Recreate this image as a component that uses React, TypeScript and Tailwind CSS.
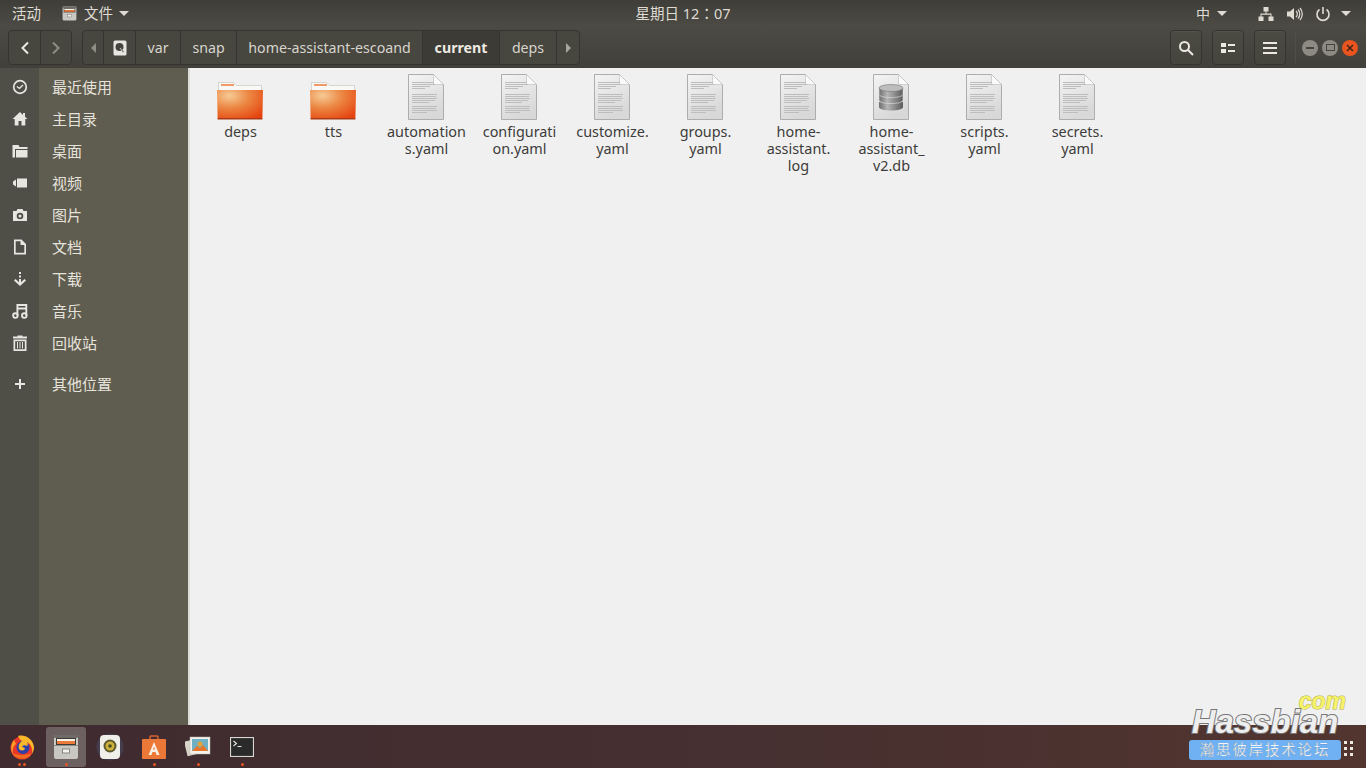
import React from "react";

const FONT = "font-['Noto_Sans','Noto_Sans_CJK_SC',sans-serif]";

const FolderIcon = () => (
  <svg width="47" height="46" viewBox="0 0 47 46">
    <defs>
      <radialGradient id="fold" cx="0.27" cy="0.2" r="0.95">
        <stop offset="0" stopColor="#f6cb96" />
        <stop offset="0.45" stopColor="#ec8743" />
        <stop offset="1" stopColor="#e5440f" />
      </radialGradient>
    </defs>
    <path d="M1.500 8.500h15l3 3h25v6h-43z" fill="#f8f8f6" stroke="#c9c7c2" strokeWidth="0.7" />
    <rect x="4" y="10" width="13" height="2" fill="#f09a68" />
    <path d="M0 16h46l-0.600 28.500H0.600z" fill="url(#fold)" />
    <rect x="0.600" y="44" width="44.800" height="1.500" fill="#a83a18" />
  </svg>
);

const docLines = [
  [8, 22], [10, 23], [12, 18], [14, 13],
  [20, 25], [22, 24], [24, 25], [26, 23], [28, 17],
  [32, 25], [34, 24], [36, 25], [38, 15],
];

const DocIcon = ({ db = false }: { db?: boolean }) => (
  <svg width="37" height="46" viewBox="0 0 37 46">
    <defs>
      <linearGradient id="pg" x1="0" y1="0" x2="0.4" y2="1">
        <stop offset="0" stopColor="#f4f4f4" />
        <stop offset="1" stopColor="#d8d8d8" />
      </linearGradient>
      <linearGradient id="cyl" x1="0" y1="0" x2="1" y2="0">
        <stop offset="0" stopColor="#6f6f6f" />
        <stop offset="0.35" stopColor="#b5b5b5" />
        <stop offset="1" stopColor="#5c5c5c" />
      </linearGradient>
    </defs>
    <path d="M0.500 0.500h25l10 10v35h-35z" fill="url(#pg)" stroke="#adadad" />
    <path d="M25.500 0.500v10h10z" fill="#fafafa" stroke="#c2c2c2" strokeWidth="0.7" />
    {!db &&
      docLines.map(([y, w], i) => (
        <rect key={i} x="4" y={y} width={w} height="1" fill="#bdbdbd" />
      ))}
    {db && (
      <g>
        <path d="M6 28v5c0 2.300 5 3.500 12 3.500s12-1.200 12-3.500v-5z" fill="url(#cyl)" />
        <path d="M6 20v6c0 2.300 5 3.500 12 3.500s12-1.200 12-3.500v-6z" fill="url(#cyl)" stroke="#e4e4e4" strokeWidth="0.6" />
        <path d="M6 14v6c0 2.300 5 3.500 12 3.500s12-1.200 12-3.500v-6z" fill="url(#cyl)" stroke="#e4e4e4" strokeWidth="0.6" />
        <ellipse cx="18" cy="14" rx="12" ry="3.500" fill="#bdbdbd" stroke="#777" strokeWidth="0.6" />
      </g>
    )}
  </svg>
);

const files: { lines: string[]; kind: "folder" | "doc" | "db" }[] = [
  { lines: ["deps"], kind: "folder" },
  { lines: ["tts"], kind: "folder" },
  { lines: ["automation", "s.yaml"], kind: "doc" },
  { lines: ["configurati", "on.yaml"], kind: "doc" },
  { lines: ["customize.", "yaml"], kind: "doc" },
  { lines: ["groups.", "yaml"], kind: "doc" },
  { lines: ["home-", "assistant.", "log"], kind: "doc" },
  { lines: ["home-", "assistant_", "v2.db"], kind: "db" },
  { lines: ["scripts.", "yaml"], kind: "doc" },
  { lines: ["secrets.", "yaml"], kind: "doc" },
];

const sideIcons: Record<string, React.ReactNode> = {
  recent: (
    <g fill="none" stroke="#e8e6e1" strokeWidth="1.700">
      <circle cx="8" cy="8" r="6.300" />
      <path d="M4.800 7.500l2.700 1.800 3.500-3.300" strokeWidth="1.300" />
    </g>
  ),
  home: <path d="M8 1L0.500 8h2.200v6.500h3.800V10h3v4.500h3.800V8h2.200l-2.500-2.300V2h-2v1.900z" fill="#e8e6e1" />,
  desktop: <path d="M0.500 2h6l1 2H15.500v2H3v8.500H0.500zM4 7h11.500v7.500H4z" fill="#e8e6e1" />,
  video: <path d="M1 6.500l3-2v7l-3-2zM5 3.500h10v9H5z" fill="#e8e6e1" />,
  photo: (
    <path
      fillRule="evenodd"
      d="M5.500 2h5l1 2h3.500v10H1V4h3.500zM8 5.700a3.300 3.300 0 100 6.600 3.300 3.300 0 000-6.600zM8 7.500a1.500 1.500 0 110 3 1.500 1.500 0 010-3z"
      fill="#e8e6e1"
    />
  ),
  docs: (
    <path fillRule="evenodd" d="M2 0.500h7.500l4.500 4.500v10.500H2zM3.700 2.200v11.600h8.600V6H8.500V2.200z" fill="#e8e6e1" />
  ),
  download: (
    <g fill="#e8e6e1">
      <rect x="7" y="1" width="2" height="2" />
      <rect x="7" y="4.500" width="2" height="2" />
      <path d="M7 8h2v3.200L12.500 8 14 9.400 8 15 2 9.400 3.500 8 7 11.200z" />
    </g>
  ),
  music: (
    <g fill="none" stroke="#e8e6e1" strokeWidth="1.900">
      <circle cx="3.400" cy="12.600" r="2.300" />
      <circle cx="12.300" cy="12.600" r="2.300" />
      <path d="M5.400 12.500V2h8.900v10.500M5.400 5.500h8.900" />
    </g>
  ),
  trash: (
    <g fill="#e8e6e1">
      <path d="M1 1.500h4.500V0.500h5v1h4.500V3.500H1z" />
      <path fillRule="evenodd" d="M1.500 4.500h13V16h-13zM3.200 6.200v8.100h9.600V6.200z" />
      <rect x="5" y="7" width="1" height="6.500" />
      <rect x="7.500" y="7" width="1" height="6.500" />
      <rect x="10" y="7" width="1" height="6.500" />
    </g>
  ),
  plus: <path d="M7 3h2v4h4v2H9v4H7V9H3V7h4z" fill="#e8e6e1" />,
};

const places = [
  ["recent", "最近使用"],
  ["home", "主目录"],
  ["desktop", "桌面"],
  ["video", "视频"],
  ["photo", "图片"],
  ["docs", "文档"],
  ["download", "下载"],
  ["music", "音乐"],
  ["trash", "回收站"],
];

const SideRow = ({ icon, label, className = "" }: { icon: string; label: string; className?: string }) => (
  <div className={`flex h-8 items-center ${className}`}>
    <div className="flex w-[39px] justify-center">
      <svg width="16" height="16" viewBox="0 0 16 16">
        {sideIcons[icon]}
      </svg>
    </div>
    <span className="ml-[13px] text-[15px] text-[#e6e3dc]">{label}</span>
  </div>
);

const Caret = () => <span className="inline-block border-x-[5px] border-t-[5px] border-x-transparent border-t-[#dfdbd2]" />;

const ToolButton = ({ children }: { children: React.ReactNode }) => (
  <div className="flex h-[35px] w-8 items-center justify-center rounded-[4px] border border-[#35342f] bg-gradient-to-b from-[#4b4a43] to-[#45443d] shadow-[inset_0_1px_0_#55544c]">
    {children}
  </div>
);

const Crumb = ({ children, w, active = false }: { children: React.ReactNode; w: string; active?: boolean }) => (
  <div
    className={`flex h-full items-center justify-center border-r border-[#35342f] text-[14.200px] ${w} ${
      active ? "bg-[#3c3b35] font-bold text-[#eeeae2]" : "text-[#d8d5cd]"
    }`}
  >
    {children}
  </div>
);

const DockDots = ({ n = 1 }: { n?: number }) => (
  <div className="absolute bottom-[1px] left-0 right-0 flex justify-center gap-[2px]">
    {Array.from({ length: n }).map((_, i) => (
      <span key={i} className="h-[3px] w-[3px] rounded-full bg-[#e9541f]" />
    ))}
  </div>
);

const DockItem = ({ children, dots = 1, active = false }: { children: React.ReactNode; dots?: number; active?: boolean }) => (
  <div className={`relative flex h-10 w-10 items-center justify-center rounded-[3px] ${active ? "bg-[#6c6160]" : ""}`}>
    {children}
    {dots > 0 && <DockDots n={dots} />}
  </div>
);

const FileCabinet = ({ size = 26 }: { size?: number }) => (
  <svg width={size} height={size} viewBox="0 0 26 26">
    <rect x="1" y="1" width="24" height="24" rx="2" fill="#c9c7c2" />
    <rect x="1" y="1" width="24" height="3" rx="1" fill="#6e6a66" />
    <rect x="3" y="4" width="20" height="7" fill="#3e3a38" />
    <rect x="4" y="5" width="18" height="2" fill="#f6f2e8" />
    <rect x="4" y="7" width="18" height="3" fill="#ea7b3a" />
    <rect x="1" y="11" width="24" height="1" fill="#8e8c88" />
    <rect x="9.500" y="15" width="7" height="4" fill="#f2f2f0" stroke="#77736f" strokeWidth="0.8" />
  </svg>
);

export default function App() {
  return (
    <div className={`flex h-screen w-full flex-col overflow-hidden bg-[#f0f0f0] ${FONT}`}>
      {/* top panel */}
      <div className="relative flex h-[27px] items-center bg-gradient-to-b from-[#3e3d39] to-[#4d4b44] text-[14.500px] text-[#dfdbd2]">
        <span className="ml-3">活动</span>
        <div className="ml-[21px] flex items-center">
          <FileCabinet size={15} />
          <span className="ml-[7px]">文件</span>
          <span className="ml-[6px] flex"><Caret /></span>
        </div>
        <span className="absolute left-0 right-0 text-center">
          星期日 12<span className="font-['Noto_Sans_CJK_TC',sans-serif]">：</span>07
        </span>
        <div className="ml-auto flex items-center">
          <span className="text-[14px]">中</span>
          <span className="ml-[7px] flex"><Caret /></span>
          <svg className="ml-[31px]" width="16" height="16" viewBox="0 0 16 16" fill="#dfdbd2">
            <path d="M5.500 1h5v4.500h-2V7.500H13.500V10.500h2V15h-5v-4.500h2V8.700H3.500v1.800h2V15h-5v-4.500h2V7.500h5V5.500h-2z" />
          </svg>
          <svg className="ml-[12px]" width="17" height="16" viewBox="0 0 17 16" fill="#dfdbd2">
            <path d="M1 5.500h3L8 2v12L4 10.500H1z" />
            <path d="M10 5a4 4 0 010 6M12 3.500a6.500 6.500 0 010 9M14 2a9 9 0 010 12" fill="none" stroke="#dfdbd2" strokeWidth="1.200" />
          </svg>
          <svg className="ml-[12px]" width="16" height="16" viewBox="0 0 16 16" fill="none" stroke="#dfdbd2" strokeWidth="1.600">
            <path d="M4.500 3.500a6 6 0 107 0M8 1v7" />
          </svg>
          <span className="ml-[10px] mr-[15px] flex"><Caret /></span>
        </div>
      </div>

      {/* header bar */}
      <div className="flex h-[41px] items-center bg-gradient-to-b from-[#4b4a43] to-[#41403a] pl-2 pr-2">
        <div className="flex h-[35px] w-[64px] rounded-[4px] border border-[#35342f] bg-[#47463f]">
          <div className="flex w-8 items-center justify-center border-r border-[#35342f]">
            <svg width="10" height="14" viewBox="0 0 10 14" fill="none" stroke="#ece9e2" strokeWidth="2">
              <path d="M8 1.500L2.500 7 8 12.500" />
            </svg>
          </div>
          <div className="flex flex-1 items-center justify-center">
            <svg width="10" height="14" viewBox="0 0 10 14" fill="none" stroke="#8f8d85" strokeWidth="2">
              <path d="M2 1.500L7.500 7 2 12.500" />
            </svg>
          </div>
        </div>
        <div className="ml-[10px] flex h-[35px] w-[498px] overflow-hidden rounded-[4px] border border-[#35342f] bg-[#47463f]">
          <Crumb w="w-[21px]">
            <span className="border-y-[5px] border-r-[5px] border-y-transparent border-r-[#8f8d85]" />
          </Crumb>
          <Crumb w="w-8">
            <svg width="14" height="16" viewBox="0 0 14 16">
              <rect x="0.500" y="0.500" width="13" height="15" rx="1.500" fill="#e8e6e1" />
              <circle cx="6.500" cy="7" r="4" fill="#45443d" />
              <path d="M7 8l4 3.500-1 1.200z" fill="#45443d" stroke="#e8e6e1" strokeWidth="0.500" />
            </svg>
          </Crumb>
          <Crumb w="w-[45px]">var</Crumb>
          <Crumb w="w-[56px]">snap</Crumb>
          <Crumb w="w-[186px]">home-assistant-escoand</Crumb>
          <Crumb w="w-[77px]" active>current</Crumb>
          <Crumb w="w-[57px]">deps</Crumb>
          <div className="flex flex-1 items-center justify-center">
            <span className="border-y-[5px] border-l-[5px] border-y-transparent border-l-[#a8a69e]" />
          </div>
        </div>
        <div className="ml-auto flex items-center gap-[10px]">
          <ToolButton>
            <svg width="16" height="16" viewBox="0 0 16 16" fill="none" stroke="#ece9e2" strokeWidth="2">
              <circle cx="6.500" cy="6.500" r="4.500" />
              <path d="M10 10l5 5" />
            </svg>
          </ToolButton>
          <ToolButton>
            <svg width="14" height="12" viewBox="0 0 14 12" fill="#ece9e2">
              <rect x="0" y="1" width="5" height="4" />
              <rect x="7" y="2" width="7" height="2" />
              <rect x="0" y="7" width="5" height="4" />
              <rect x="7" y="8" width="7" height="2" />
            </svg>
          </ToolButton>
          <ToolButton>
            <svg width="14" height="12" viewBox="0 0 14 12" fill="#ece9e2">
              <rect width="14" height="2" />
              <rect y="5" width="14" height="2" />
              <rect y="10" width="14" height="2" />
            </svg>
          </ToolButton>
          <div className="ml-[-1px] h-[30px] w-px bg-[#4f4e47]" />
          <div className="ml-[-4px] flex items-center gap-[4px]">
            <div className="flex h-4 w-4 items-center justify-center rounded-full bg-[#8c8a82]">
              <span className="h-[2px] w-2 bg-[#45443d]" />
            </div>
            <div className="flex h-4 w-4 items-center justify-center rounded-full bg-[#8c8a82]">
              <span className="h-[7px] w-[9px] border-[1.500px] border-[#45443d]" />
            </div>
            <div className="flex h-4 w-4 items-center justify-center rounded-full bg-[#e9541f] text-[#40231a]">
              <svg width="8" height="8" viewBox="0 0 8 8" stroke="currentColor" strokeWidth="1.500">
                <path d="M1 1l6 6M7 1L1 7" />
              </svg>
            </div>
          </div>
        </div>
      </div>

      {/* body */}
      <div className="flex flex-1">
        <div className="relative w-[190px] border-r-2 border-[#dcdcd8] bg-[#5f5c50] pt-[3px]">
          <div className="absolute inset-y-0 left-0 w-[39px] bg-[#4f4e47]" />
          <div className="relative">
            {places.map(([icon, label]) => (
              <SideRow key={icon} icon={icon} label={label} />
            ))}
            <SideRow icon="plus" label="其他位置" className="mt-[9px]" />
          </div>
        </div>
        <div className="flex flex-1 items-start pl-1 pt-[6px]">
          {files.map((f) => (
            <div key={f.lines.join("")} className="flex w-[93px] flex-col items-center">
              <div className="flex h-[46px] items-end justify-center">
                {f.kind === "folder" ? <FolderIcon /> : <DocIcon db={f.kind === "db"} />}
              </div>
              <div className="mt-[3px] text-center text-[14.400px] leading-[17px] text-[#3d3c3a]">
                {f.lines.map((l) => (
                  <div key={l} className="whitespace-nowrap">{l}</div>
                ))}
              </div>
            </div>
          ))}
        </div>
      </div>

      {/* dock */}
      <div className="relative flex h-[43px] items-center gap-[4px] bg-gradient-to-r from-[#3f2b30] via-[#452f30] to-[#52352f] pl-[2px]">
        <DockItem dots={2}>
          <svg width="26" height="26" viewBox="0 0 26 26">
            <circle cx="13" cy="14" r="11.500" fill="#e8362b" />
            <path d="M3 19a11.500 11.500 0 0020 0c-3 2-14 3-20 0z" fill="#f26a1f" />
            <circle cx="14" cy="13.500" r="6.500" fill="#2f3fa8" />
            <path d="M9 2c7-2 15 3 16 11 0 3-1 5-2 7 1-5-1-10-5-12 1 2 1 3 0 4-2-1-4-1-5 1 2 0 3 1 3 2-2 2-4 2-6 0-1-3 0-6 3-8-2-1-3-3-4-5z" fill="#fcb72a" />
            <path d="M5 6c-3 4-4 10-1 14-1-4 0-8 3-10z" fill="#f9a024" />
          </svg>
        </DockItem>
        <DockItem active>
          <FileCabinet />
        </DockItem>
        <DockItem dots={0}>
          <svg width="28" height="28" viewBox="0 0 28 28">
            <circle cx="14" cy="14" r="13.500" fill="#4a4a62" opacity="0.6" />
            <rect x="4" y="2" width="20" height="24" rx="4" fill="#f0efe9" />
            <circle cx="14" cy="13" r="6.500" fill="#5e5a30" />
            <circle cx="14" cy="13" r="4.500" fill="#cdb23a" />
            <circle cx="14" cy="13" r="1.800" fill="#4c4826" />
          </svg>
        </DockItem>
        <DockItem>
          <svg width="26" height="26" viewBox="0 0 26 26">
            <path d="M9 5V3a1 1 0 011-1h6a1 1 0 011 1v2" fill="none" stroke="#d9642c" strokeWidth="1.500" />
            <rect x="1" y="5" width="24" height="20" rx="1" fill="#ec7838" />
            <path d="M13 8l5.500 13h-3l-1-3h-3l-1 3h-3zM13 12.500l-1 3h2z" fill="#fbeee4" />
          </svg>
        </DockItem>
        <DockItem>
          <svg width="26" height="24" viewBox="0 0 26 24">
            <rect x="0.500" y="5" width="14" height="15" fill="#d8d4c8" transform="rotate(-14 7 12)" />
            <rect x="5" y="2" width="20" height="17" fill="#f4f2ec" stroke="#bdb9ae" strokeWidth="0.500" />
            <rect x="7" y="4" width="16" height="12" fill="#6fb0c4" />
            <path d="M7 16l5-5 3 2 3-3 5 6z" fill="#e8752a" />
            <circle cx="15" cy="9" r="2.500" fill="#e9a13a" />
          </svg>
        </DockItem>
        <DockItem>
          <svg width="24" height="20" viewBox="0 0 24 20">
            <rect x="0.500" y="0.500" width="23" height="19" fill="#2a2a2a" stroke="#d8d6d0" strokeWidth="1.200" />
            <path d="M3.500 4l3 2.500-3 2.500" fill="none" stroke="#e8e6e0" strokeWidth="1.100" />
            <rect x="7.500" y="9" width="4" height="1" fill="#e8e6e0" />
          </svg>
        </DockItem>

        {/* grid launcher */}
        <div className="absolute bottom-[12px] right-[13px] grid grid-cols-2 gap-[3px]">
          {[0, 1, 2, 3, 4, 5].map((i) => (
            <span key={i} className="h-[3px] w-[3px] bg-[#ece8e2]" />
          ))}
        </div>
      </div>

      {/* forum watermark */}
      <div className="absolute bottom-[8px] right-[25px] flex w-[152px] flex-col items-end">
        <span className="absolute right-[-5px] top-[-16px] font-['Liberation_Sans',sans-serif] text-[23px] font-bold italic leading-none text-[#f6f26a] [-webkit-text-stroke:1px_#b5ae40] [paint-order:stroke_fill]">
          com
        </span>
        <span className="w-full text-center font-['Liberation_Sans',sans-serif] text-[33px] font-bold italic leading-[32px] text-[#eeeeee] [-webkit-text-stroke:2px_#777777] [paint-order:stroke_fill]">
          Hassbian
        </span>
        <div className="mt-[2px] flex h-[20px] w-[152px] items-center justify-center rounded-[3px] bg-[#6fb1f3] text-[14.500px] tracking-[1.800px] text-[#f2f4f6] [-webkit-text-stroke:0.2px_#667788]">
          瀚思彼岸技术论坛
        </div>
      </div>
    </div>
  );
}
